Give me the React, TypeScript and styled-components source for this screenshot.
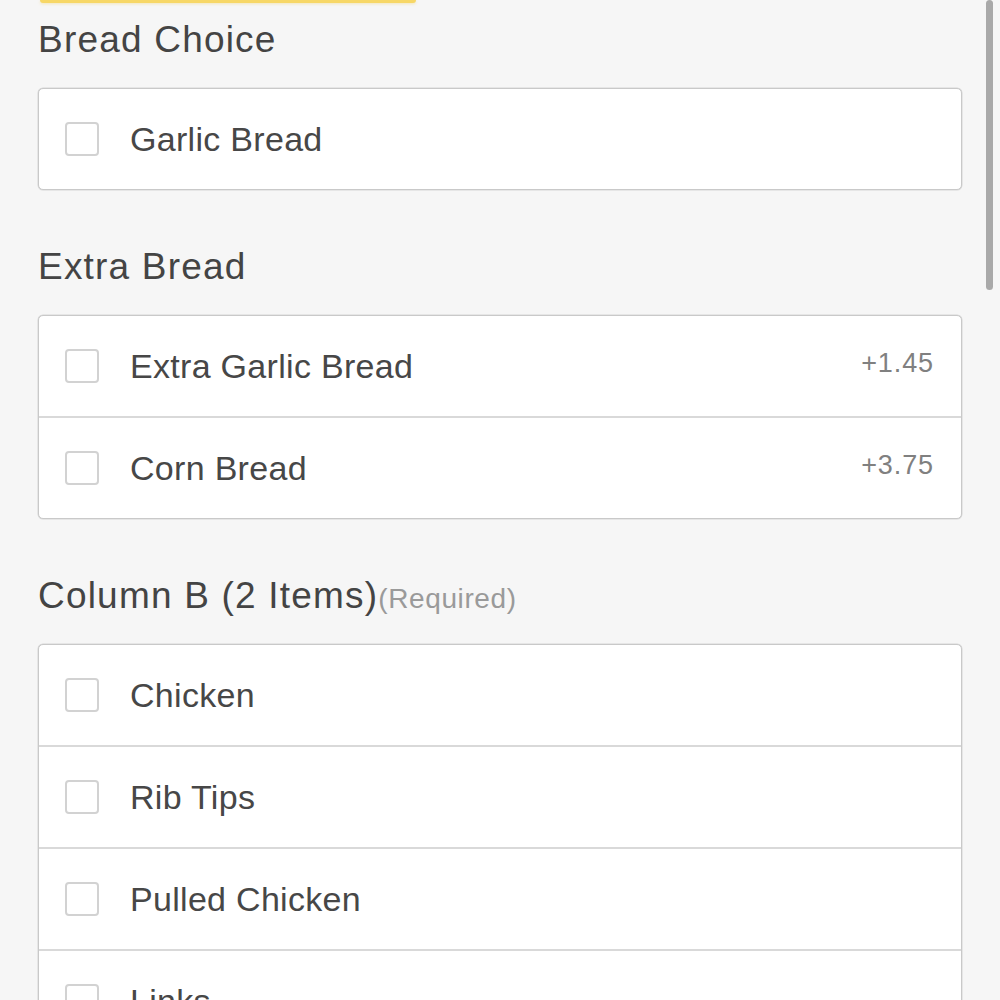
import React from "react";
import styled, { createGlobalStyle } from "styled-components";

const GlobalStyle = createGlobalStyle`
  html, body {
    margin: 0;
    padding: 0;
    overflow: hidden;
    background: #f6f6f6;
  }
  body {
    font-family: "Liberation Sans", Arial, Helvetica, sans-serif;
    color: #474747;
  }
`;

const Page = styled.div`
  position: relative;
  min-height: 1000px;
  padding: 0 38px;
  background: #f6f6f6;
`;

const ButtonEdge = styled.div`
  width: 376px;
  height: 3px;
  margin-left: 2px;
  background: #f7d766;
  border-radius: 0 0 14px 14px;
  box-shadow: 0 1px 3px rgba(240, 205, 90, 0.4);
`;

const Scrollbar = styled.div`
  position: absolute;
  top: 0;
  right: 7px;
  width: 7px;
  height: 290px;
  border-radius: 4px;
  background: #a9a9a9;
`;

const Section = styled.section<{ first?: boolean }>`
  margin-top: ${({ first }) => (first ? "15px" : "55px")};
`;

const Heading = styled.h2`
  margin: 0 0 26px;
  font-size: 37px;
  line-height: 44px;
  font-weight: 400;
  letter-spacing: 1.2px;
  color: #444;
  white-space: nowrap;
`;

const Note = styled.span`
  font-size: 28px;
  line-height: 1;
  letter-spacing: 0.6px;
  color: #9a9a9a;
`;

const Card = styled.div`
  background: #fff;
  border: 1px solid #c9c9c9;
  border-radius: 5px;
  box-shadow: 0 0 0 0.5px #d6d6d6;
  overflow: hidden;
`;

const Row = styled.label`
  display: flex;
  align-items: center;
  height: 100px;
  padding: 0 27px 0 26px;
  & + & {
    border-top: 2px solid #d9d9d9;
  }
`;

const Box = styled.span`
  flex: none;
  width: 30px;
  height: 30px;
  border: 2px solid #d2d2d2;
  border-radius: 4px;
  background: #fff;
`;

const Label = styled.span`
  flex: 1;
  margin-left: 31px;
  font-size: 34px;
  letter-spacing: 0.3px;
  color: #474747;
  white-space: nowrap;
`;

const Price = styled.span`
  margin-bottom: 6px;
  font-size: 27px;
  letter-spacing: 0.9px;
  color: #808080;
`;

interface Option {
  name: string;
  price?: string;
}

interface Group {
  title: string;
  note?: string;
  options: Option[];
}

const groups: Group[] = [
  { title: "Bread Choice", options: [{ name: "Garlic Bread" }] },
  {
    title: "Extra Bread",
    options: [
      { name: "Extra Garlic Bread", price: "+1.45" },
      { name: "Corn Bread", price: "+3.75" },
    ],
  },
  {
    title: "Column B (2 Items)",
    note: "(Required)",
    options: [
      { name: "Chicken" },
      { name: "Rib Tips" },
      { name: "Pulled Chicken" },
      { name: "Links" },
    ],
  },
];

export default function App() {
  return (
    <Page>
      <GlobalStyle />
      <ButtonEdge />
      {groups.map((g, i) => (
        <Section key={g.title} first={i === 0}>
          <Heading>
            {g.title}
            {g.note && <Note>{g.note}</Note>}
          </Heading>
          <Card>
            {g.options.map((o) => (
              <Row key={o.name}>
                <Box />
                <Label>{o.name}</Label>
                {o.price && <Price>{o.price}</Price>}
              </Row>
            ))}
          </Card>
        </Section>
      ))}
      <Scrollbar />
    </Page>
  );
}
